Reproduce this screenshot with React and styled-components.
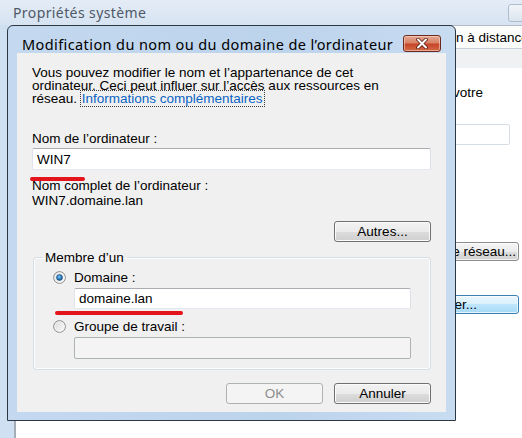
import React from "react";
import styled, { createGlobalStyle } from "styled-components";

const GlobalStyle = createGlobalStyle`
  html, body {
    margin: 0;
    padding: 0;
  }
  body {
    background: #ffffff;
    font-family: "Liberation Sans", Arial, sans-serif;
    font-size: 13.5px;
    color: #000;
  }
`;

const Screen = styled.div`
  position: relative;
  width: 522px;
  height: 438px;
  overflow: hidden;
`;

/* ---------- window behind (Propriétés système) ---------- */

const BackWindow = styled.div`
  display: flex;
  flex-direction: column;
  height: 100%;
  background: #d2e1f1;
`;

const BackTitleBar = styled.div`
  height: 25px;
  flex: none;
  display: flex;
  align-items: center;
  justify-content: space-between;
  padding-left: 13px;
  background: linear-gradient(#e4ecf6, #d6e3f1);
  font-family: "Noto Sans", "Open Sans", sans-serif;
  font-size: 14px;
  letter-spacing: 0.4px;
  color: #4e5866;
`;

const CaptionStub = styled.div`
  align-self: flex-start;
  width: 22px;
  height: 16px;
  margin-top: 4px;
  margin-right: -10px;
  border: 1px solid #aebdcd;
  border-radius: 3px;
  background: linear-gradient(#f1f5f9, #dce5ef);
`;

const BackBody = styled.div`
  flex: 1;
  display: flex;
  min-height: 0;
`;

const BackFrame = styled.div`
  width: 14px;
  flex: none;
  background: #cfe0f2;
  border-right: 2px solid #a4acb5;
`;

const BackClient = styled.div`
  flex: 1;
  min-width: 0;
  overflow: hidden;
  display: flex;
  flex-direction: column;
  background: #ffffff;
`;

const TabRow = styled.div`
  height: 22px;
  flex: none;
  display: flex;
  align-items: center;
  border-top: 1px solid #b3bcc7;
  border-bottom: 1px solid #c9d0d8;
  background: #fcfcfc;
  white-space: nowrap;
  overflow: hidden;
`;

const TabLabel = styled.span`
  margin-left: ${(p) => p.$offset}px;
`;

const SubTabRow = styled.div`
  height: 19px;
  flex: none;
  background: #f0f1f3;
`;

const TabPage = styled.div`
  flex: 1;
  display: flex;
  flex-direction: column;
  align-items: flex-end;
  padding: 18px 3px 0 0;
`;

const PageText = styled.div`
  white-space: nowrap;
  margin-right: 36px;
  line-height: 14px;
`;

const PageField = styled.div`
  width: 200px;
  height: 19px;
  margin: 24px 9px 0 0;
  border: 1px solid #d7dde4;
  border-radius: 2px;
`;

const PageButton = styled.div`
  width: 144px;
  height: 19px;
  box-sizing: border-box;
  display: flex;
  align-items: center;
  justify-content: flex-end;
  padding-right: ${(p) => p.$pad}px;
  margin-top: ${(p) => p.$top}px;
  border: 1px solid ${(p) => (p.$hot ? "#3c7fb1" : "#8c8c8c")};
  border-radius: 3px;
  white-space: nowrap;
  background: ${(p) =>
    p.$hot
      ? "linear-gradient(#eaf6fd 0%, #d9f0fc 50%, #bee6fd 50%, #a7d9f5 100%)"
      : "linear-gradient(#f4f4f4 0%, #ececec 50%, #dedede 50%, #d2d2d2 100%)"};
  box-shadow: inset 0 0 0 1px rgba(255, 255, 255, 0.7);
`;

/* ---------- dialog ---------- */

const Dialog = styled.div`
  position: absolute;
  left: 7px;
  top: 25px;
  width: 449px;
  height: 396px;
  box-sizing: border-box;
  display: flex;
  flex-direction: column;
  padding: 0 9px 8px 9px;
  border: 1px solid #2d3842;
  border-radius: 6px 6px 0 0;
  background: linear-gradient(90deg, #c4d9ef, #bcd3ec 60%, #c8dcf1);
`;

const TitleBar = styled.div`
  height: 27px;
  flex: none;
  display: flex;
  align-items: center;
  justify-content: space-between;
  padding: 8px 5px 0 5px;
  box-sizing: border-box;
  font-family: "Noto Sans", "Open Sans", sans-serif;
  font-size: 14.5px;
  letter-spacing: 0.4px;
  color: #000;
  white-space: nowrap;
`;

const CloseButton = styled.div`
  width: 38px;
  height: 17px;
  flex: none;
  box-sizing: border-box;
  display: flex;
  align-items: center;
  justify-content: center;
  border: 1px solid #6b2a1d;
  border-radius: 3px;
  background: linear-gradient(#e5a691 0%, #d88366 45%, #c7452a 55%, #d36a45 100%);
  box-shadow: inset 0 0 0 1px rgba(255, 220, 210, 0.55);
`;

const Client = styled.div`
  position: relative;
  flex: 1;
  display: flex;
  flex-direction: column;
  padding: 13px 15px 0 15px;
  background: #f0f0f0;
`;

const Paragraph = styled.p`
  margin: 0;
  line-height: 13px;
`;

const Link = styled.span`
  color: #0b64c4;
  outline: 1px dotted #3a3a3a;
  padding: 0 1px;
`;

const Label = styled.div`
  line-height: ${(p) => p.$lh || 13}px;
  margin-top: ${(p) => p.$top || 0}px;
`;

const TextBox = styled.div`
  height: ${(p) => p.$h || 22}px;
  box-sizing: border-box;
  display: flex;
  align-items: center;
  padding-left: 4px;
  margin-top: ${(p) => p.$top || 0}px;
  margin-right: ${(p) => p.$right || 0}px;
  margin-left: ${(p) => p.$left || 0}px;
  border: 1px solid;
  border-color: #abadb3 #dbdfe6 #e3e9ef #e2e3ea;
  border-radius: 2px;
  background: ${(p) => (p.$disabled ? "#f4f4f4" : "#ffffff")};
  ${(p) => p.$disabled && "border-color: #adb2b5;"}
`;

const ButtonRow = styled.div`
  display: flex;
  justify-content: flex-end;
  gap: 11px;
  margin-top: ${(p) => p.$top}px;
`;

const Button = styled.div`
  width: 97px;
  height: 21px;
  box-sizing: border-box;
  display: flex;
  align-items: center;
  justify-content: center;
  border: 1px solid ${(p) => (p.$disabled ? "#adb2b5" : "#707070")};
  border-radius: 3px;
  color: ${(p) => (p.$disabled ? "#8d8d8d" : "#000")};
  background: ${(p) =>
    p.$disabled
      ? "#f4f4f4"
      : "linear-gradient(#f2f2f2 0%, #ebebeb 50%, #dddddd 50%, #cfcfcf 100%)"};
  box-shadow: ${(p) => (p.$disabled ? "none" : "inset 0 0 0 1px #fbfbfb")};
`;

const GroupBox = styled.fieldset`
  margin: 9px 0 0 1px;
  padding: 7px 0 10px 0;
  border: 1px solid #d5dfe5;
  border-radius: 3px;
  box-shadow: inset 0 0 0 1px #fbfcfd;
`;

const Legend = styled.legend`
  margin-left: 8px;
  padding: 0 3px;
  line-height: 13px;
`;

const RadioRow = styled.div`
  display: flex;
  align-items: center;
  gap: 8px;
  height: 13px;
  padding-left: 19px;
  line-height: 13px;
  margin-top: ${(p) => p.$top || 0}px;
`;

const Annotation = styled.div`
  position: absolute;
  left: ${(p) => p.$x}px;
  top: ${(p) => p.$y}px;
  width: ${(p) => p.$w}px;
  height: 4px;
  border-radius: 2px;
  background: #e3141c;
`;

function Radio({ checked }) {
  const fillId = checked ? "radioOn" : "radioOff";
  return (
    <svg width="13" height="13" viewBox="0 0 13 13">
      <defs>
        <linearGradient id={fillId} x1="0" y1="0" x2="1" y2="1">
          <stop offset="0" stopColor="#d6d6d6" />
          <stop offset="1" stopColor="#ffffff" />
        </linearGradient>
        <radialGradient id="radioDot" cx="0.45" cy="0.4" r="0.6">
          <stop offset="0" stopColor="#8ad0f5" />
          <stop offset="0.55" stopColor="#2f7fbf" />
          <stop offset="1" stopColor="#16487c" />
        </radialGradient>
      </defs>
      <circle cx="6.5" cy="6.5" r="5.9" fill={`url(#${fillId})`} stroke="#8e8f8f" strokeWidth="1" />
      <circle cx="6.5" cy="6.5" r="4.5" fill="none" stroke="#f4f4f4" strokeWidth="0.8" />
      {checked && <circle cx="6.5" cy="6.5" r="3" fill="url(#radioDot)" stroke="#1d5a8e" strokeWidth="0.6" />}
    </svg>
  );
}

export default function App() {
  return (
    <Screen>
      <GlobalStyle />
      <BackWindow>
        <BackTitleBar>
          Propriétés système
          <CaptionStub />
        </BackTitleBar>
        <BackBody>
          <BackFrame />
          <BackClient>
            <TabRow>
              <TabLabel $offset={389}>Utilisation à distance</TabLabel>
            </TabRow>
            <SubTabRow />
            <TabPage>
              <PageText>Windows utilise les informations suivantes pour identifier votre</PageText>
              <PageField />
              <PageButton $pad={2} $top={97}>Identité sur le réseau...</PageButton>
              <PageButton $pad={41} $top={34} $hot>Modifier...</PageButton>
            </TabPage>
          </BackClient>
        </BackBody>
      </BackWindow>

      <Dialog>
        <TitleBar>
          Modification du nom ou du domaine de l’ordinateur
          <CloseButton>
            <svg width="16" height="11" viewBox="0 0 16 11">
              <path d="M4 1.5 L12 9.5 M12 1.5 L4 9.5" stroke="#5a1a10" strokeWidth="3.6" strokeLinecap="round" />
              <path d="M4 1.5 L12 9.5 M12 1.5 L4 9.5" stroke="#ffffff" strokeWidth="2" strokeLinecap="round" />
            </svg>
          </CloseButton>
        </TitleBar>
        <Client>
          <Paragraph>
            Vous pouvez modifier le nom et l’appartenance de cet
            <br />
            ordinateur. Ceci peut influer sur l’accès aux ressources en
            <br />
            réseau. <Link>Informations complémentaires</Link>
          </Paragraph>
          <Label $top={27}>Nom de l’ordinateur :</Label>
          <TextBox $top={3}>WIN7</TextBox>
          <Label $top={8} $lh={15}>Nom complet de l’ordinateur :</Label>
          <Label $lh={15}>WIN7.domaine.lan</Label>
          <ButtonRow $top={13}>
            <Button>Autres...</Button>
          </ButtonRow>
          <GroupBox>
            <Legend>Membre d’un</Legend>
            <RadioRow>
              <Radio checked />
              Domaine :
            </RadioRow>
            <TextBox $top={4} $left={40} $right={19} $h={21}>domaine.lan</TextBox>
            <RadioRow $top={11}>
              <Radio />
              Groupe de travail :
            </RadioRow>
            <TextBox $top={4} $left={40} $right={19} $disabled />
          </GroupBox>
          <ButtonRow $top={13}>
            <Button $disabled>OK</Button>
            <Button>Annuler</Button>
          </ButtonRow>
          <Annotation $x={13} $y={124} $w={55} />
          <Annotation $x={38} $y={258} $w={128} />
        </Client>
      </Dialog>
    </Screen>
  );
}
